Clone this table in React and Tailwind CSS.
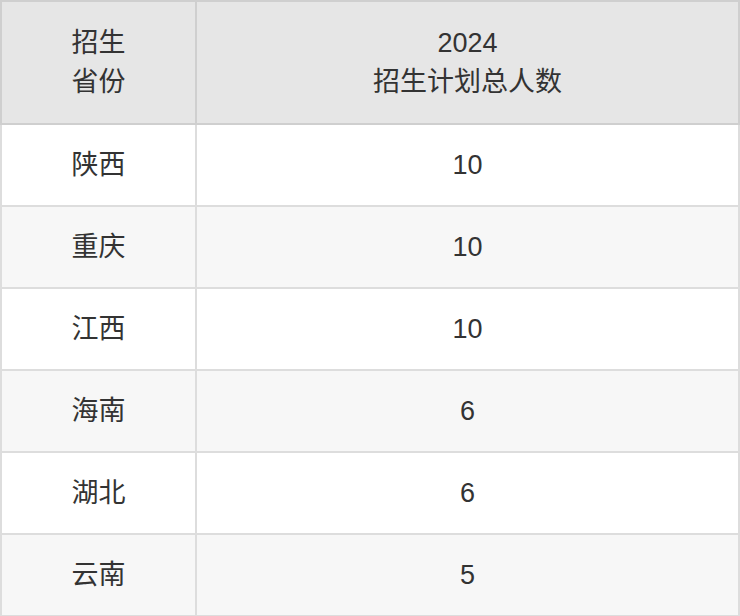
const rows = [
  ['陕西', '10'],
  ['重庆', '10'],
  ['江西', '10'],
  ['海南', '6'],
  ['湖北', '6'],
  ['云南', '5'],
];

export default function App() {
  return (
    <div className="w-[740px] h-[616px] bg-white text-[#333] font-['Liberation_Sans','Noto_Sans_CJK_SC',sans-serif]">
      <table className="w-[740px] border-collapse table-fixed text-[27px] text-center">
        <colgroup>
          <col className="w-[195px]" />
          <col />
        </colgroup>
        <thead>
          <tr className="h-[123px] bg-[#e6e6e6]">
            <th className="border-2 border-[#cfcfcf] font-normal leading-[39px]">
              招生
              <br />
              省份
            </th>
            <th className="border-2 border-[#cfcfcf] font-normal leading-[39px]">
              2024
              <br />
              招生计划总人数
            </th>
          </tr>
        </thead>
        <tbody>
          {rows.map(([p, n], i) => (
            <tr key={p} className={`h-[82px] ${i % 2 ? 'bg-[#f7f7f7]' : 'bg-white'}`}>
              <td className="border-2 border-[#dddddd]">{p}</td>
              <td className="border-2 border-[#dddddd]">{n}</td>
            </tr>
          ))}
        </tbody>
      </table>
    </div>
  );
}
